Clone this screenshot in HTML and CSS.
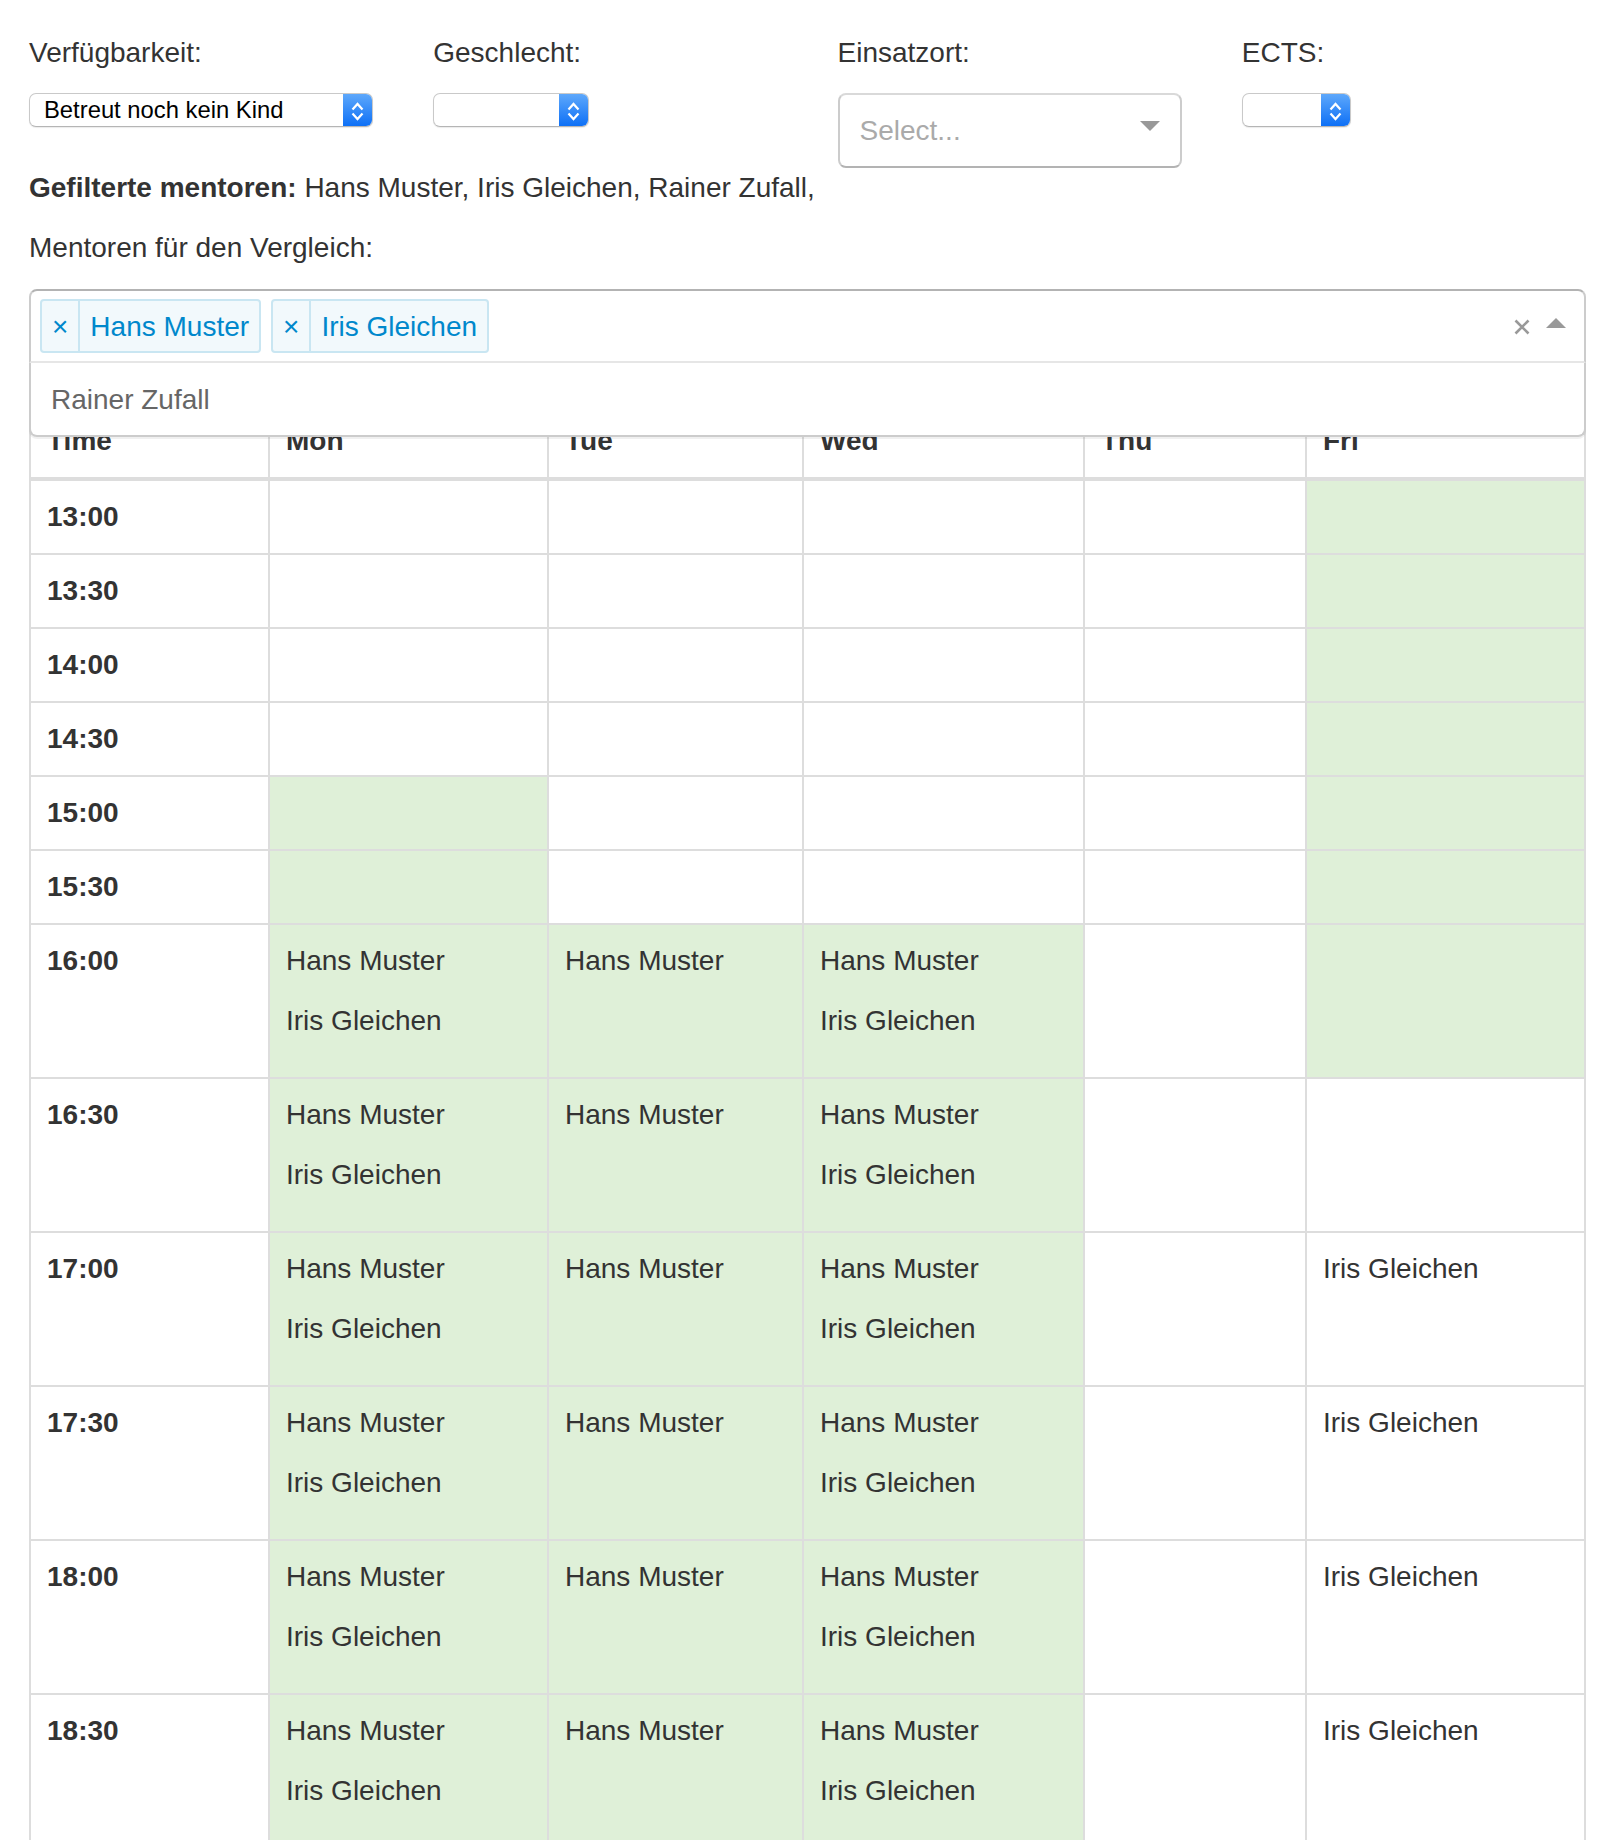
FILE: index.html
```html
<!DOCTYPE html>
<html lang="de">
<head>
<meta charset="utf-8">
<title>Mentoren Vergleich</title>
<link rel="stylesheet" href="styles.css">
</head>
<body>
<div class="page">
  <div class="filters">
    <div class="filter">
      <div class="filter-label">Verfügbarkeit:</div>
      <div class="native-select native-select--full">
        <span class="native-value">Betreut noch kein Kind</span>
        <span class="stepper"><svg width="29" height="33" viewBox="0 0 29 33"><path d="M9.5 15.5 L14.5 10 L19.5 15.5" fill="none" stroke="#fff" stroke-width="2.2"/><path d="M9.5 19.5 L14.5 25 L19.5 19.5" fill="none" stroke="#fff" stroke-width="2.2"/></svg></span>
      </div>
    </div>
    <div class="filter">
      <div class="filter-label">Geschlecht:</div>
      <div class="native-select native-select--gender">
        <span class="native-value"></span>
        <span class="stepper"><svg width="29" height="33" viewBox="0 0 29 33"><path d="M9.5 15.5 L14.5 10 L19.5 15.5" fill="none" stroke="#fff" stroke-width="2.2"/><path d="M9.5 19.5 L14.5 25 L19.5 19.5" fill="none" stroke="#fff" stroke-width="2.2"/></svg></span>
      </div>
    </div>
    <div class="filter">
      <div class="filter-label">Einsatzort:</div>
      <div class="rs-single">
        <span class="rs-placeholder">Select...</span>
        <span class="rs-arrow-down"></span>
      </div>
    </div>
    <div class="filter">
      <div class="filter-label">ECTS:</div>
      <div class="native-select native-select--ects">
        <span class="native-value"></span>
        <span class="stepper"><svg width="29" height="33" viewBox="0 0 29 33"><path d="M9.5 15.5 L14.5 10 L19.5 15.5" fill="none" stroke="#fff" stroke-width="2.2"/><path d="M9.5 19.5 L14.5 25 L19.5 19.5" fill="none" stroke="#fff" stroke-width="2.2"/></svg></span>
      </div>
    </div>
  </div>

  <p class="filtered"><strong>Gefilterte mentoren:</strong> Hans Muster, Iris Gleichen, Rainer Zufall,</p>

  <div class="compare-label">Mentoren für den Vergleich:</div>

  <div class="rs-multi">
    <div class="rs-control">
      <div class="rs-tags">
        <span class="rs-tag"><span class="rs-tag-icon">×</span><span class="rs-tag-label">Hans Muster</span></span>
        <span class="rs-tag"><span class="rs-tag-icon">×</span><span class="rs-tag-label">Iris Gleichen</span></span>
      </div>
      <div class="rs-indicators">
        <svg class="rs-clear" width="16" height="16" viewBox="0 0 16 16"><path d="M1.5 1.5 L14.5 14.5 M14.5 1.5 L1.5 14.5" stroke="#999" stroke-width="2.6" fill="none"/></svg>
        <span class="rs-arrow-up"></span>
      </div>
    </div>
    <div class="rs-menu">
      <div class="rs-option">Rainer Zufall</div>
    </div>
  </div>

  <table class="schedule">
    <colgroup>
      <col class="c-time"><col class="c-mon"><col class="c-tue"><col class="c-wed"><col class="c-thu"><col class="c-fri">
    </colgroup>
    <thead>
      <tr><th>Time</th><th>Mon</th><th>Tue</th><th>Wed</th><th>Thu</th><th>Fri</th></tr>
    </thead>
    <tbody>
      <tr><td class="time">13:00</td><td></td><td></td><td></td><td></td><td class="ok"></td></tr>
      <tr><td class="time">13:30</td><td></td><td></td><td></td><td></td><td class="ok"></td></tr>
      <tr><td class="time">14:00</td><td></td><td></td><td></td><td></td><td class="ok"></td></tr>
      <tr><td class="time">14:30</td><td></td><td></td><td></td><td></td><td class="ok"></td></tr>
      <tr><td class="time">15:00</td><td class="ok"></td><td></td><td></td><td></td><td class="ok"></td></tr>
      <tr><td class="time">15:30</td><td class="ok"></td><td></td><td></td><td></td><td class="ok"></td></tr>
      <tr><td class="time">16:00</td><td class="ok"><p>Hans Muster</p><p>Iris Gleichen</p></td><td class="ok"><p>Hans Muster</p></td><td class="ok"><p>Hans Muster</p><p>Iris Gleichen</p></td><td></td><td class="ok"></td></tr>
      <tr><td class="time">16:30</td><td class="ok"><p>Hans Muster</p><p>Iris Gleichen</p></td><td class="ok"><p>Hans Muster</p></td><td class="ok"><p>Hans Muster</p><p>Iris Gleichen</p></td><td></td><td></td></tr>
      <tr><td class="time">17:00</td><td class="ok"><p>Hans Muster</p><p>Iris Gleichen</p></td><td class="ok"><p>Hans Muster</p></td><td class="ok"><p>Hans Muster</p><p>Iris Gleichen</p></td><td></td><td><p>Iris Gleichen</p></td></tr>
      <tr><td class="time">17:30</td><td class="ok"><p>Hans Muster</p><p>Iris Gleichen</p></td><td class="ok"><p>Hans Muster</p></td><td class="ok"><p>Hans Muster</p><p>Iris Gleichen</p></td><td></td><td><p>Iris Gleichen</p></td></tr>
      <tr><td class="time">18:00</td><td class="ok"><p>Hans Muster</p><p>Iris Gleichen</p></td><td class="ok"><p>Hans Muster</p></td><td class="ok"><p>Hans Muster</p><p>Iris Gleichen</p></td><td></td><td><p>Iris Gleichen</p></td></tr>
      <tr><td class="time">18:30</td><td class="ok"><p>Hans Muster</p><p>Iris Gleichen</p></td><td class="ok"><p>Hans Muster</p></td><td class="ok"><p>Hans Muster</p><p>Iris Gleichen</p></td><td></td><td><p>Iris Gleichen</p></td></tr>
    </tbody>
  </table>
</div>
</body>
</html>
```

FILE: styles.css
```css
* { box-sizing: border-box; }

html, body {
  margin: 0;
  background: #fff;
}

body {
  font-family: "Liberation Sans", Arial, Helvetica, sans-serif;
  font-size: 28px;
  line-height: 40px;
  color: #333;
}

.page {
  padding: 33px 20px 0 29px;
}

/* ---------- filter row ---------- */
.filters {
  display: grid;
  grid-template-columns: repeat(4, 1fr);
  column-gap: 60px;
  align-items: start;
}

.filter-label {
  line-height: 40px;
  margin-bottom: 20px;
}

.native-select {
  display: flex;
  height: 34px;
  margin-top: 6px;
  border: 1px solid #c9c9c9;
  border-bottom-color: #b5b5b5;
  border-radius: 7px;
  background: #fff;
  box-shadow: 0 1px 1px rgba(0,0,0,0.08);
  overflow: hidden;
}

.native-select--full { width: 100%; }
.native-select--gender { width: 156px; }
.native-select--ects { width: 109px; }

.native-value {
  flex: 1;
  padding-left: 14px;
  font-size: 23.8px;
  line-height: 32px;
  color: #000;
  white-space: nowrap;
}

.stepper {
  width: 29px;
  flex: none;
  background: linear-gradient(#5ea8fb, #0e70f6);
  display: flex;
}

/* ---------- react-select single ---------- */
.rs-single {
  height: 75px;
  border: 2px solid #ccc;
  border-color: #d9d9d9 #ccc #b3b3b3;
  border-radius: 8px;
  background: #fff;
  display: flex;
  align-items: center;
  padding: 0 20px;
}

.rs-placeholder {
  flex: 1;
  color: #aaa;
}

.rs-arrow-down {
  width: 0;
  height: 0;
  border-style: solid;
  border-width: 10px 10px 0;
  border-color: #999 transparent transparent;
  margin-top: -10px;
}

/* ---------- text ---------- */
.filtered {
  margin: 0 0 20px;
}

.filtered strong { font-weight: bold; }

.compare-label {
  margin: 0 0 21px;
}

/* ---------- react-select multi ---------- */
.rs-multi {
  position: relative;
  margin-bottom: 40px;
}

.rs-control {
  height: 74px;
  display: flex;
  align-items: flex-start;
  border: 2px solid #ccc;
  border-color: #b3b3b3 #ccc #e6e6e6;
  border-radius: 8px 8px 0 0;
  background: #fff;
  padding-left: 9px;
}

.rs-tags {
  display: flex;
  flex: 1;
  gap: 10px;
  padding-top: 8px;
}

.rs-tag {
  display: inline-flex;
  height: 54px;
  border: 2px solid #c9e6f2;
  border-radius: 4px;
  background: #f2f9fc;
  color: #08c;
}

.rs-tag-icon {
  padding: 0 10px;
  line-height: 51px;
  border-right: 2px solid #c9e6f2;
}

.rs-tag-label {
  padding: 0 10px;
  line-height: 52px;
}

.rs-indicators {
  height: 70px;
  display: flex;
  align-items: center;
  padding-right: 18px;
}

.rs-clear {
  display: block;
  margin-right: 16px;
  margin-top: 2px;
}

.rs-arrow-up {
  width: 0;
  height: 0;
  border-style: solid;
  border-width: 0 10px 10px;
  border-color: transparent transparent #999;
  margin-top: -6px;
}

.rs-menu {
  position: absolute;
  top: 100%;
  left: 0;
  right: 0;
  z-index: 2;
  background: #fff;
  border: 2px solid #ccc;
  border-top: none;
  border-radius: 0 0 8px 8px;
  box-shadow: 0 2px 0 rgba(0,0,0,0.06);
}

.rs-option {
  padding: 17px 20px 15px;
  line-height: 40px;
  color: #666;
}

/* ---------- schedule table ---------- */
.schedule {
  width: 1557px;
  table-layout: fixed;
  border-collapse: separate;
  border-spacing: 0;
}

.c-time { width: 241px; }
.c-mon  { width: 279px; }
.c-tue  { width: 255px; }
.c-wed  { width: 281px; }
.c-thu  { width: 222px; }
.c-fri  { width: 279px; }

.schedule th,
.schedule td {
  padding: 16px;
  line-height: 40px;
  text-align: left;
  vertical-align: top;
  border-right: 2px solid #ddd;
  border-bottom: 2px solid #ddd;
}

.schedule th {
  font-weight: bold;
  vertical-align: bottom;
  border-top: 2px solid #ddd;
  border-bottom-width: 4px;
}

.schedule th:first-child,
.schedule td:first-child {
  border-left: 2px solid #ddd;
}

.schedule td.time {
  font-weight: bold;
}

.schedule td.ok {
  background: #dff0d8;
}

.schedule td p {
  margin: 0 0 20px;
}
```
